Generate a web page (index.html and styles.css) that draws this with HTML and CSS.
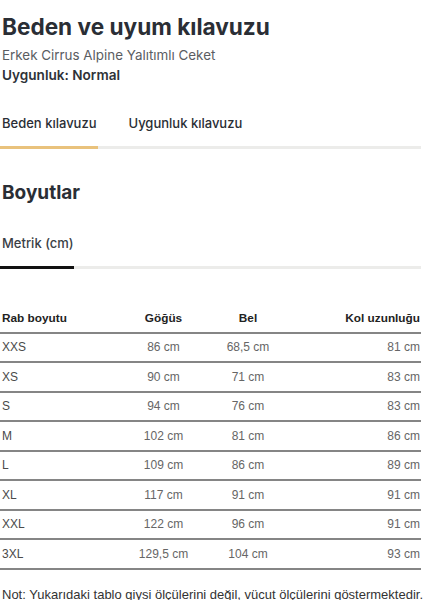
FILE: index.html
```html
<!DOCTYPE html>
<html lang="tr">
<head>
<meta charset="utf-8">
<title>Beden ve uyum kılavuzu</title>
<link rel="stylesheet" href="styles.css">
</head>
<body>
<div class="page">
  <h1 class="title">Beden ve uyum kılavuzu</h1>
  <p class="subtitle">Erkek Cirrus Alpine Yalıtımlı Ceket</p>
  <p class="fit">Uygunluk: Normal</p>

  <div class="tabs">
    <div class="tab active">Beden kılavuzu</div>
    <div class="tab">Uygunluk kılavuzu</div>
  </div>

  <h2 class="section">Boyutlar</h2>

  <div class="units">
    <div class="unit active">Metrik (cm)</div>
  </div>

  <table class="sizes">
    <colgroup>
      <col class="c1"><col class="c2"><col class="c3"><col class="c4">
    </colgroup>
    <thead>
      <tr><th class="l">Rab boyutu</th><th class="c">Göğüs</th><th class="c">Bel</th><th class="r">Kol uzunluğu</th></tr>
    </thead>
    <tbody>
      <tr><td class="l">XXS</td><td class="c">86 cm</td><td class="c">68,5 cm</td><td class="r">81 cm</td></tr>
      <tr><td class="l">XS</td><td class="c">90 cm</td><td class="c">71 cm</td><td class="r">83 cm</td></tr>
      <tr><td class="l">S</td><td class="c">94 cm</td><td class="c">76 cm</td><td class="r">83 cm</td></tr>
      <tr><td class="l">M</td><td class="c">102 cm</td><td class="c">81 cm</td><td class="r">86 cm</td></tr>
      <tr><td class="l">L</td><td class="c">109 cm</td><td class="c">86 cm</td><td class="r">89 cm</td></tr>
      <tr><td class="l">XL</td><td class="c">117 cm</td><td class="c">91 cm</td><td class="r">91 cm</td></tr>
      <tr><td class="l">XXL</td><td class="c">122 cm</td><td class="c">96 cm</td><td class="r">91 cm</td></tr>
      <tr><td class="l">3XL</td><td class="c">129,5 cm</td><td class="c">104 cm</td><td class="r">93 cm</td></tr>
    </tbody>
  </table>

  <p class="note">Not: Yukarıdaki tablo giysi ölçülerini değil, vücut ölçülerini göstermektedir.</p>
</div>
</body>
</html>
```

FILE: styles.css
```css
html, body {
  margin: 0;
  padding: 0;
  background: #ffffff;
}

.page {
  width: 421px;
  font-family: Inter, "Liberation Sans", sans-serif;
  color: #2b2f36;
}

.title {
  margin: 13px 0 0 2px;
  font-size: 22.6px;
  line-height: 28px;
  font-weight: 700;
  color: #2a2e35;
}

.subtitle {
  margin: 5px 0 0 2px;
  font-size: 13.4px;
  line-height: 18px;
  color: #5a5d62;
}

.fit {
  margin: 2px 0 0 2px;
  font-size: 13.6px;
  line-height: 18px;
  font-weight: 600;
  color: #2e3238;
}

.tabs {
  display: flex;
  gap: 29px;
  margin-top: 30px;
  border-bottom: 3px solid #ececea;
}

.tab {
  white-space: nowrap;
  font-size: 13px;
  line-height: 18px;
  font-weight: 500;
  color: #2a2e35;
  padding: 0 1px 14px 2px;
  margin-bottom: -3px;
  border-bottom: 3px solid transparent;
}

.tab.active {
  border-bottom-color: #e9c27c;
}

.section {
  margin: 32px 0 0 2px;
  font-size: 19px;
  line-height: 24px;
  font-weight: 700;
  color: #2a2e35;
}

.units {
  display: flex;
  margin-top: 29px;
  border-bottom: 3px solid #ececea;
}

.unit {
  white-space: nowrap;
  font-size: 13px;
  line-height: 18px;
  font-weight: 500;
  color: #3a3e45;
  padding: 0 0 14px 2px;
  margin-bottom: -3px;
  border-bottom: 3px solid transparent;
}

.unit.active {
  border-bottom-color: #111111;
}

.sizes {
  width: 421px;
  margin-top: 35px;
  border-collapse: collapse;
  table-layout: fixed;
  font-family: "Liberation Sans", Arial, sans-serif;
  font-size: 12px;
}

.c1 { width: 125px; }
.c2 { width: 77px; }
.c3 { width: 92px; }

.sizes th,
.sizes td {
  height: 27.5px;
  padding: 0;
  border-bottom: 2px solid #858585;
}

.sizes th {
  font-size: 11.8px;
  font-weight: 700;
  color: #222222;
}

.sizes td {
  color: #666666;
}

.sizes td.l {
  color: #4a4a4a;
}

.l { text-align: left; padding-left: 2px !important; }
.c { text-align: center; }
.r { text-align: right; padding-right: 1px !important; }

.note {
  margin: 17px 0 0 2px;
  font-family: "Liberation Sans", Arial, sans-serif;
  font-size: 13px;
  line-height: 15px;
  color: #333333;
  white-space: nowrap;
}
```
